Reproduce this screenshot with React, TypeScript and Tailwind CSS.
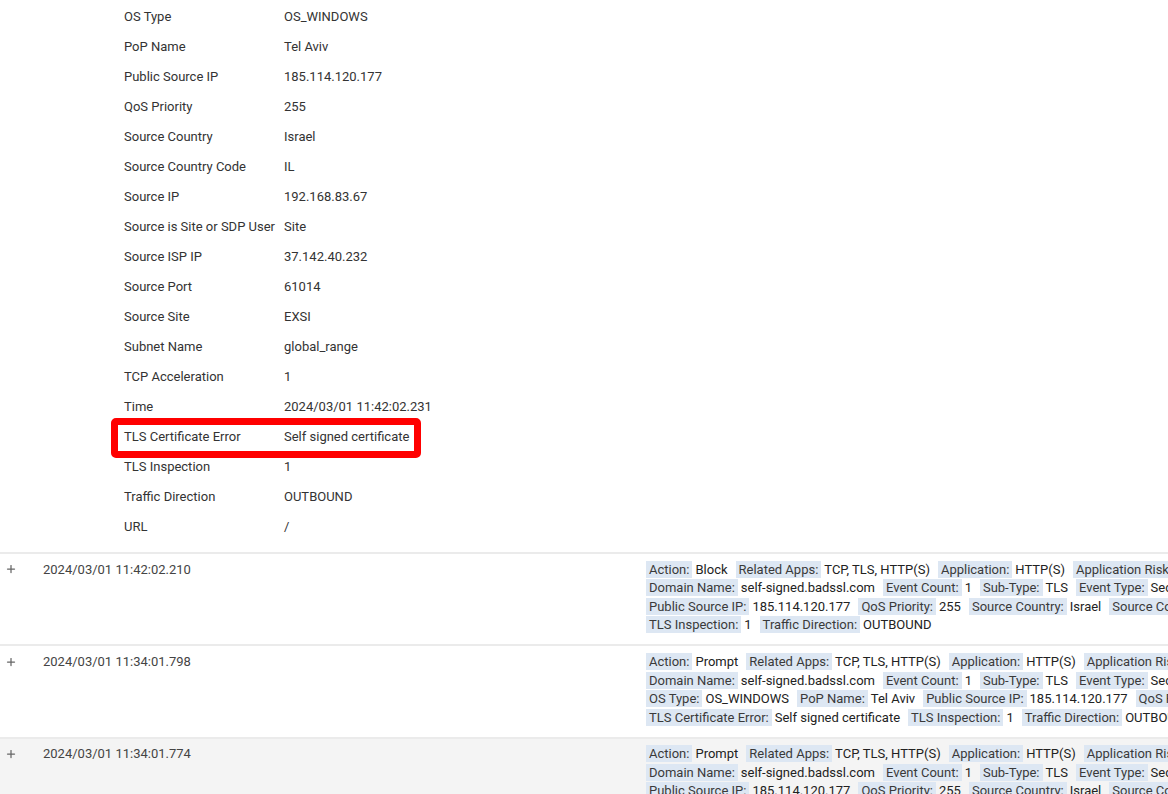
import { Plus } from 'lucide-react';

type Pair = [string, string];

const details: Pair[] = [
  ['OS Type', 'OS_WINDOWS'],
  ['PoP Name', 'Tel Aviv'],
  ['Public Source IP', '185.114.120.177'],
  ['QoS Priority', '255'],
  ['Source Country', 'Israel'],
  ['Source Country Code', 'IL'],
  ['Source IP', '192.168.83.67'],
  ['Source is Site or SDP User', 'Site'],
  ['Source ISP IP', '37.142.40.232'],
  ['Source Port', '61014'],
  ['Source Site', 'EXSI'],
  ['Subnet Name', 'global_range'],
  ['TCP Acceleration', '1'],
  ['Time', '2024/03/01 11:42:02.231'],
  ['TLS Certificate Error', 'Self signed certificate'],
  ['TLS Inspection', '1'],
  ['Traffic Direction', 'OUTBOUND'],
  ['URL', '/'],
];

const head = (action: string): Pair[][] => [
  [
    ['Action', action],
    ['Related Apps', 'TCP, TLS, HTTP(S)'],
    ['Application', 'HTTP(S)'],
    ['Application Risk', '1'],
    ['Category', 'Security'],
  ],
  [
    ['Domain Name', 'self-signed.badssl.com'],
    ['Event Count', '1'],
    ['Sub-Type', 'TLS'],
    ['Event Type', 'Security'],
    ['Internet Access', 'Yes'],
  ],
];

const short: Pair[][] = [
  [
    ['Public Source IP', '185.114.120.177'],
    ['QoS Priority', '255'],
    ['Source Country', 'Israel'],
    ['Source Country Code', 'IL'],
  ],
  [
    ['TLS Inspection', '1'],
    ['Traffic Direction', 'OUTBOUND'],
  ],
];

const events: { time: string; lines: Pair[][]; hover?: boolean }[] = [
  { time: '2024/03/01 11:42:02.210', lines: [...head('Block'), ...short] },
  {
    time: '2024/03/01 11:34:01.798',
    lines: [
      ...head('Prompt'),
      [
        ['OS Type', 'OS_WINDOWS'],
        ['PoP Name', 'Tel Aviv'],
        ['Public Source IP', '185.114.120.177'],
        ['QoS Priority', '255'],
      ],
      [
        ['TLS Certificate Error', 'Self signed certificate'],
        ['TLS Inspection', '1'],
        ['Traffic Direction', 'OUTBOUND'],
      ],
    ],
  },
  { time: '2024/03/01 11:34:01.774', lines: [...head('Prompt'), ...short], hover: true },
];

const Field = ({ label, value }: { label: string; value: string }) => (
  <span className="mr-[8px] whitespace-nowrap">
    <span className="bg-[#dde7f3] px-[3px] py-[1px] text-[#3a3a3a]">{label}:</span>
    <span className="ml-[3px] text-[#222]">{value}</span>
  </span>
);

export default function App() {
  return (
    <div
      className="w-[1168px] h-[794px] overflow-hidden bg-white text-[13px] text-[#333]"
      style={{ fontFamily: 'Roboto, "Liberation Sans", sans-serif' }}
    >
      <div className="pt-[2px] pl-[124px] pb-[10px]">
        {details.map(([label, value]) => (
          <div key={label} className="relative flex h-[30px] items-center">
            {label === 'TLS Certificate Error' && (
              <div className="absolute left-[-13px] top-[-4px] w-[310px] h-[40px] border-[7px] border-[#ff0000] rounded-[5px]" />
            )}
            <span className="w-[160px] shrink-0">{label}</span>
            <span>{value}</span>
          </div>
        ))}
      </div>

      {events.map((ev) => (
        <div
          key={ev.time}
          className={`flex border-t-2 border-[#ebebeb] pt-[6px] pb-[10px] ${ev.hover ? 'bg-[#f4f4f4]' : 'bg-white'}`}
        >
          <div className="flex h-[18.6px] w-[43px] shrink-0 items-center pl-[5px] text-[#666]">
            <Plus size={12} strokeWidth={2.5} />
          </div>
          <div className="flex h-[18.6px] w-[603px] shrink-0 items-center text-[#444]">{ev.time}</div>
          <div className="min-w-0 flex-1">
            {ev.lines.map((line, i) => (
              <div key={i} className="flex h-[18.6px] items-center whitespace-nowrap">
                {line.map(([l, v]) => (
                  <Field key={l} label={l} value={v} />
                ))}
              </div>
            ))}
          </div>
        </div>
      ))}
    </div>
  );
}
